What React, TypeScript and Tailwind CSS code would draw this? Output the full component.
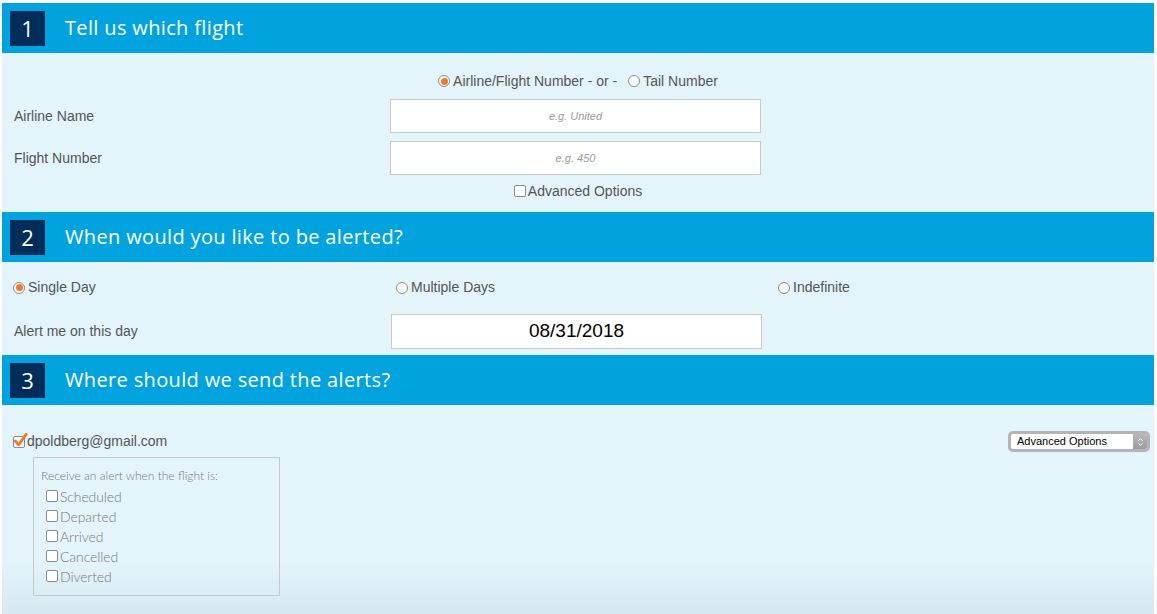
const Radio = ({ checked = false }: { checked?: boolean }) => (
  <span className="mr-[3px] inline-flex h-[12px] w-[12px] shrink-0 items-center justify-center rounded-full border border-[#8a8a8a] bg-white">
    {checked && <span className="h-[7px] w-[7px] rounded-full bg-[#f0782d]" />}
  </span>
);

const Checkbox = ({ checked = false }: { checked?: boolean }) => (
  <span className="relative mr-[2px] inline-block h-[12px] w-[12px] shrink-0 rounded-[2px] border border-[#8a8a8a] bg-white">
    {checked && (
      <svg
        viewBox="0 0 16 16"
        className="absolute -left-[1px] -top-[4px] h-[15px] w-[15px]"
      >
        <path
          d="M2.5 8.5 L6 12.5 L14 1.5"
          fill="none"
          stroke="#f0782d"
          strokeWidth="3"
          strokeLinecap="round"
          strokeLinejoin="round"
        />
      </svg>
    )}
  </span>
);

const SectionHeader = ({ n, title }: { n: number; title: string }) => (
  <div className="flex h-[50px] items-center bg-[#00a3dd] pl-[8px]">
    <div className="flex h-[35px] w-[35px] items-center justify-center bg-[#002d5a] font-['Open_Sans',sans-serif] text-[22px] text-white">
      {n}
    </div>
    <h2 className="ml-[20px] font-['Open_Sans',sans-serif] text-[20px] tracking-[0.35px] text-white">
      {title}
    </h2>
  </div>
);

const TextInput = ({ placeholder }: { placeholder: string }) => (
  <div className="flex h-[34px] w-[371px] items-center justify-center border border-[#c9c9c9] bg-white text-[11px] italic text-[#9a9a9a]">
    {placeholder}
  </div>
);

const statuses = ["Scheduled", "Departed", "Arrived", "Cancelled", "Diverted"];

export default function App() {
  return (
    <div className="min-h-[614px] bg-white pl-[2px] pr-[3px] pt-[3px] font-['Liberation_Sans',Arial,sans-serif] text-[14px] text-[#555]">
      <SectionHeader n={1} title="Tell us which flight" />
      <div className="bg-[#e3f4fb] px-3 pb-[12px] pt-[19px]">
        <div className="flex h-[18px] items-center justify-center">
          <label className="flex items-center">
            <Radio checked />
            Airline/Flight Number - or -
          </label>
          <label className="ml-[11px] flex items-center">
            <Radio />
            Tail Number
          </label>
        </div>
        <div className="mt-[9px] flex items-center">
          <span className="w-[376px]">Airline Name</span>
          <TextInput placeholder="e.g. United" />
        </div>
        <div className="mt-2 flex items-center">
          <span className="w-[376px]">Flight Number</span>
          <TextInput placeholder="e.g. 450" />
        </div>
        <div className="mt-[7px] flex h-[18px] items-center justify-center">
          <label className="flex items-center">
            <Checkbox />
            Advanced Options
          </label>
        </div>
      </div>

      <SectionHeader n={2} title="When would you like to be alerted?" />
      <div className="bg-[#e3f4fb] px-3 pb-[6px] pt-[15px]">
        <div className="-ml-[1px] grid h-[18px] grid-cols-[383px_382px_1fr] items-center">
          <label className="flex items-center">
            <Radio checked />
            Single Day
          </label>
          <label className="flex items-center">
            <Radio />
            Multiple Days
          </label>
          <label className="flex items-center">
            <Radio />
            Indefinite
          </label>
        </div>
        <div className="mt-[19px] flex items-center">
          <span className="w-[377px]">Alert me on this day</span>
          <div className="flex h-[35px] w-[371px] items-center justify-center border border-[#c9c9c9] bg-white text-[19px] text-black">
            08/31/2018
          </div>
        </div>
      </div>

      <SectionHeader n={3} title="Where should we send the alerts?" />
      <div className="h-[209px] bg-gradient-to-b from-[#e3f4fb] from-[75%] to-[#d6e9f1] pl-[11px] pr-[4px] pt-[26px]">
        <div className="flex h-[21px] items-center justify-between">
          <label className="flex items-center">
            <Checkbox checked />
            dpoldberg@gmail.com
          </label>
          <div className="flex h-[21px] w-[142px] items-stretch rounded-[5px] border-[3px] border-[#b4b4b4] bg-white">
            <span className="flex flex-1 items-center pl-[6px] text-[11px] text-black">
              Advanced Options
            </span>
            <span className="flex w-[14px] items-center justify-center rounded-r-[2px] bg-gradient-to-b from-[#b8b8b8] to-[#9c9c9c]">
              <svg viewBox="0 0 8 12" className="h-[10px] w-[7px]">
                <path
                  d="M1.5 4.5 L4 2 L6.5 4.5 M1.5 7.5 L4 10 L6.5 7.5"
                  fill="none"
                  stroke="white"
                  strokeWidth="1.2"
                />
              </svg>
            </span>
          </div>
        </div>
        <div className="ml-[20px] mt-[5px] w-[247px] border border-[#c8c8c8] pb-[9px] pl-[7px] pt-[10px] font-['Lato',sans-serif] font-light text-[#7a7a7a]">
          <div className="h-[16px] text-[12px] leading-[16px] tracking-[0px]">
            Receive an alert when the flight is:
          </div>
          <div className="mt-[2px] pl-[5px]">
            {statuses.map((s) => (
              <label key={s} className="flex h-[20px] items-center text-[14px] tracking-[-0.1px]">
                <Checkbox />
                {s}
              </label>
            ))}
          </div>
        </div>
      </div>
    </div>
  );
}
